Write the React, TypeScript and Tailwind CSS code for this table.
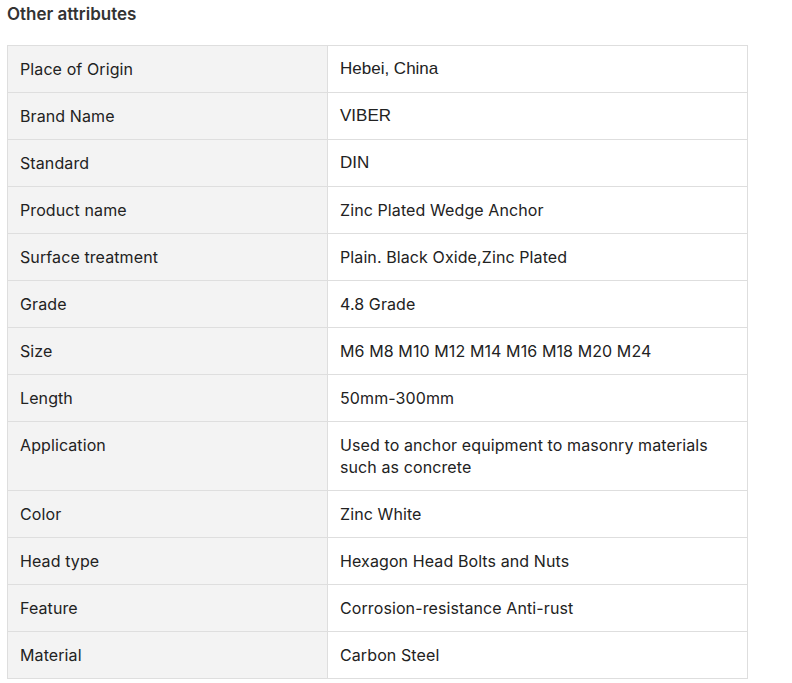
import React from "react";

const rows: { label: string; value: string; arial?: boolean }[] = [
  { label: "Place of Origin", value: "Hebei, China", arial: true },
  { label: "Brand Name", value: "VIBER", arial: true },
  { label: "Standard", value: "DIN", arial: true },
  { label: "Product name", value: "Zinc Plated Wedge Anchor" },
  { label: "Surface treatment", value: "Plain. Black Oxide,Zinc Plated" },
  { label: "Grade", value: "4.8 Grade" },
  { label: "Size", value: "M6 M8 M10 M12 M14 M16 M18 M20 M24" },
  { label: "Length", value: "50mm-300mm" },
  { label: "Application", value: "Used to anchor equipment to masonry materials such as concrete" },
  { label: "Color", value: "Zinc White" },
  { label: "Head type", value: "Hexagon Head Bolts and Nuts" },
  { label: "Feature", value: "Corrosion-resistance Anti-rust" },
  { label: "Material", value: "Carbon Steel" },
];

export default function App() {
  return (
    <div className="min-h-screen bg-white px-[7px] pt-[3px] text-[#222] font-['Inter',sans-serif]">
      <h3 className="text-[17px] font-semibold leading-[22px] text-[#333]">Other attributes</h3>
      <table className="mt-[20px] w-[741px] border-collapse text-[16px] leading-[22px] tracking-[0.1px]">
        <tbody>
          {rows.map((r) => (
            <tr key={r.label}>
              <td className="w-[320px] border border-[#dedede] bg-[#f3f3f3] px-3 py-3 align-top">{r.label}</td>
              <td
                className={
                  "border border-[#dedede] px-3 py-3 align-top " +
                  (r.arial ? "font-['Liberation_Sans',Arial,sans-serif] text-[17px] tracking-normal" : "")
                }
              >
                {r.value}
              </td>
            </tr>
          ))}
        </tbody>
      </table>
    </div>
  );
}
